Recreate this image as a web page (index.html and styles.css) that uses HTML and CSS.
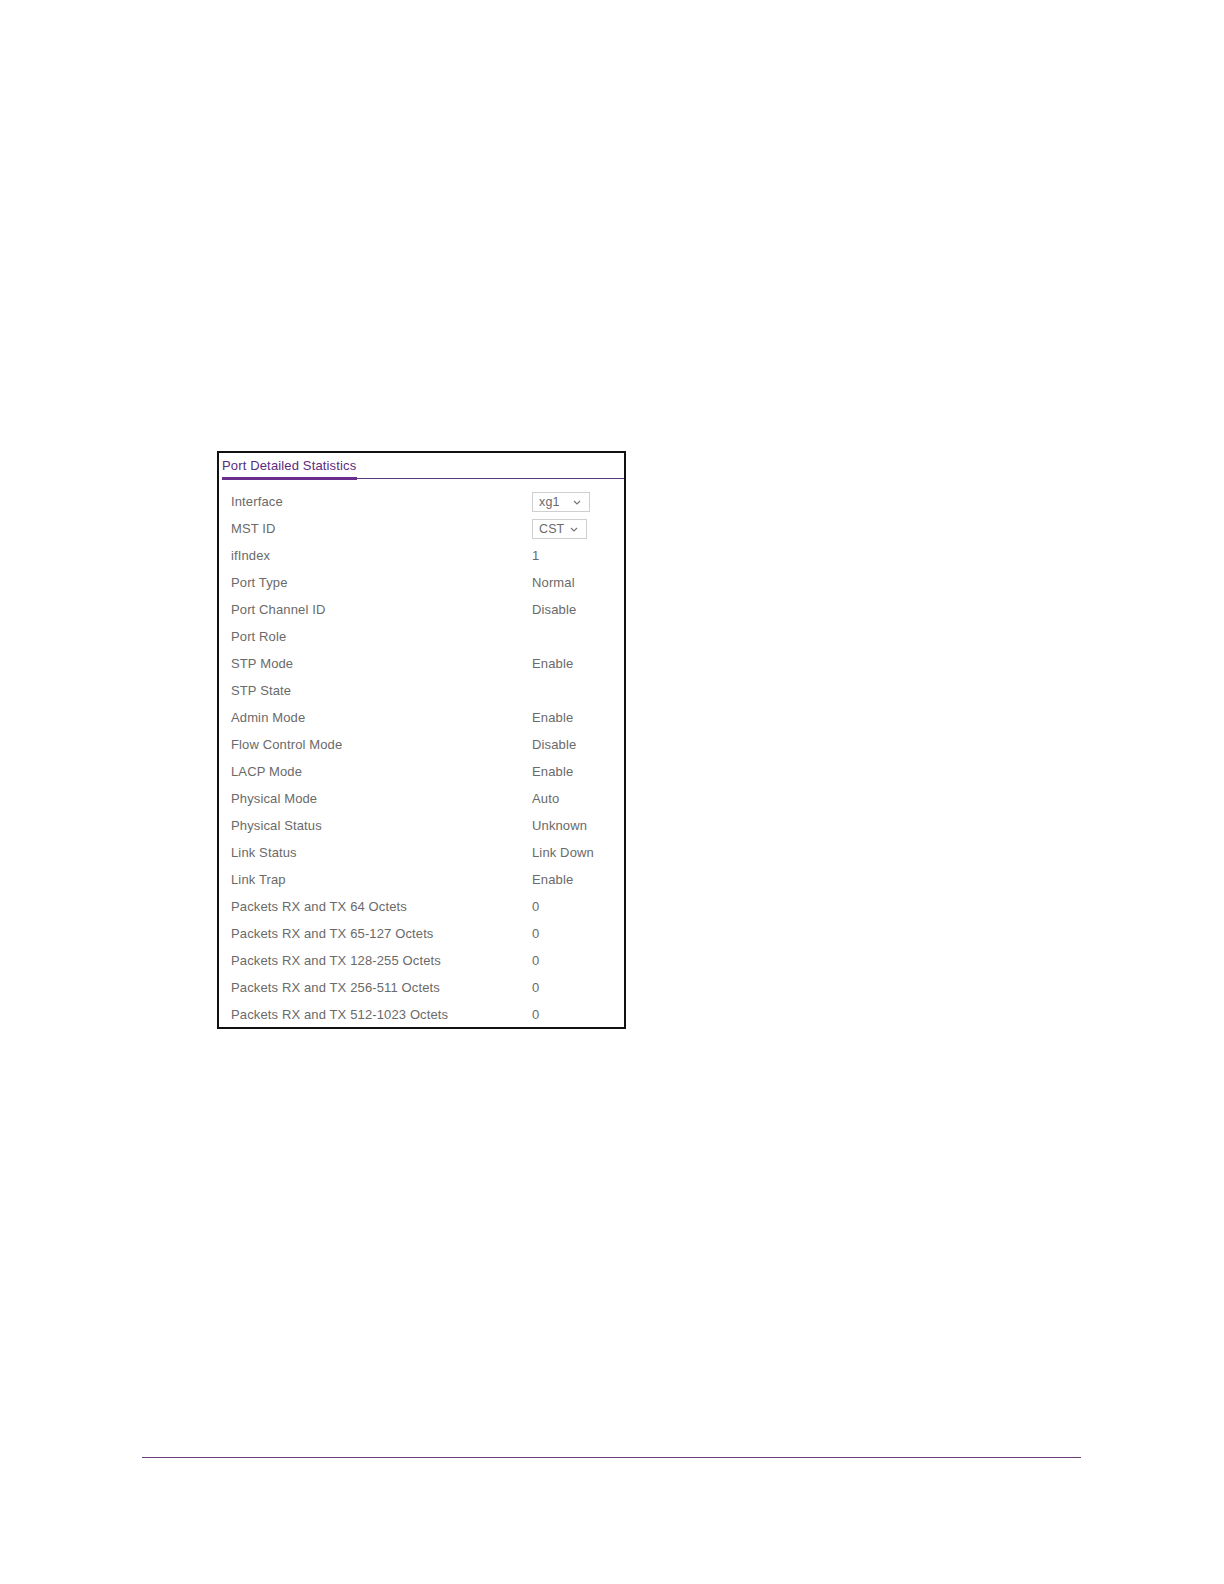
FILE: index.html
```html
<!DOCTYPE html>
<html>
<head>
<meta charset="utf-8">
<link rel="stylesheet" href="styles.css">
</head>
<body>
<div class="page">
  <div class="panel">
    <div class="panel-head"><span class="panel-title">Port Detailed Statistics</span></div>
    <div class="rows">
      <div class="row"><span class="label">Interface</span><span class="value"><span class="select sel-xg">xg1<svg class="chev" viewBox="0 0 8 5" width="8" height="5"><path d="M1 1 L4 4 L7 1" fill="none" stroke="#777" stroke-width="1.2"/></svg></span></span></div>
      <div class="row"><span class="label">MST ID</span><span class="value"><span class="select sel-cst">CST<svg class="chev" viewBox="0 0 8 5" width="8" height="5"><path d="M1 1 L4 4 L7 1" fill="none" stroke="#777" stroke-width="1.2"/></svg></span></span></div>
      <div class="row"><span class="label">ifIndex</span><span class="value">1</span></div>
      <div class="row"><span class="label">Port Type</span><span class="value">Normal</span></div>
      <div class="row"><span class="label">Port Channel ID</span><span class="value">Disable</span></div>
      <div class="row"><span class="label">Port Role</span><span class="value"></span></div>
      <div class="row"><span class="label">STP Mode</span><span class="value">Enable</span></div>
      <div class="row"><span class="label">STP State</span><span class="value"></span></div>
      <div class="row"><span class="label">Admin Mode</span><span class="value">Enable</span></div>
      <div class="row"><span class="label">Flow Control Mode</span><span class="value">Disable</span></div>
      <div class="row"><span class="label">LACP Mode</span><span class="value">Enable</span></div>
      <div class="row"><span class="label">Physical Mode</span><span class="value">Auto</span></div>
      <div class="row"><span class="label">Physical Status</span><span class="value">Unknown</span></div>
      <div class="row"><span class="label">Link Status</span><span class="value">Link Down</span></div>
      <div class="row"><span class="label">Link Trap</span><span class="value">Enable</span></div>
      <div class="row"><span class="label">Packets RX and TX 64 Octets</span><span class="value">0</span></div>
      <div class="row"><span class="label">Packets RX and TX 65-127 Octets</span><span class="value">0</span></div>
      <div class="row"><span class="label">Packets RX and TX 128-255 Octets</span><span class="value">0</span></div>
      <div class="row"><span class="label">Packets RX and TX 256-511 Octets</span><span class="value">0</span></div>
      <div class="row"><span class="label">Packets RX and TX 512-1023 Octets</span><span class="value">0</span></div>
    </div>
  </div>
  <div class="footer-rule"></div>
</div>
</body>
</html>
```

FILE: styles.css
```css
html, body {
  margin: 0;
  padding: 0;
  background: #ffffff;
}
.page {
  padding: 451px 0 0 217px;
  font-family: "Liberation Sans", Arial, sans-serif;
}
.panel {
  width: 405px;
  height: 574px;
  border: 2px solid #111;
  overflow: hidden;
  background: #fff;
}
.panel-head {
  margin: 0 0 0 3px;
  height: 25px;
  border-bottom: 1px solid #5a3a78;
  display: flex;
  align-items: flex-end;
}
.panel-title {
  display: inline-block;
  font-size: 13px;
  letter-spacing: 0.15px;
  color: #5b2b80;
  padding: 0 0 4px 0;
  border-bottom: 3px solid #6a2f8e;
  margin-bottom: -2px;
  width: 135px;
  line-height: 15px;
}
.rows {
  padding-top: 9px;
}
.row {
  display: flex;
  align-items: center;
  height: 27px;
  font-size: 13px;
  letter-spacing: 0.13px;
  color: #6a6a6a;
}
.label {
  width: 301px;
  padding-left: 12px;
}
.value {
  flex: 1;
}
.select {
  display: inline-flex;
  align-items: center;
  justify-content: space-between;
  box-sizing: border-box;
  height: 20px;
  border: 1px solid #cfcfcf;
  padding: 0 8px 0 6px;
  font-size: 12.5px;
  color: #6a6a6a;
}
.sel-xg { width: 58px; }
.sel-cst { width: 55px; }
.chev { margin-top: 1px; }
.footer-rule {
  margin: 428px 0 0 -75px;
  width: 939px;
  height: 1px;
  background: #6b3f7c;
}
```
